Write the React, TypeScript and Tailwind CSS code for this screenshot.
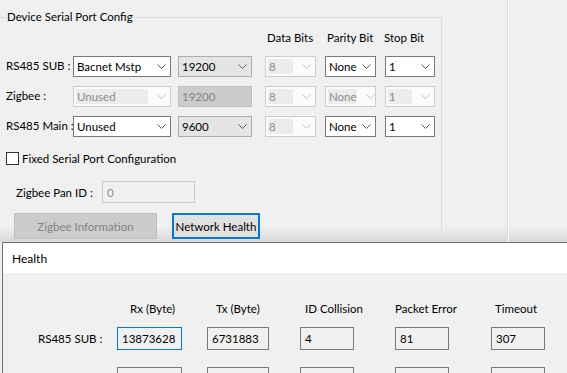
import React from "react"

type Kind = "white" | "gray" | "grayOff" | "editOff"

function Chevron({ off }: { off?: boolean }) {
  return (
    <svg width="9" height="5" viewBox="0 0 9 5" className="shrink-0">
      <path d="M0.5 0.5 L4.5 4.5 L8.5 0.5" fill="none" stroke={off ? "#c2c2c2" : "#5a5a5a"} strokeWidth="1" />
    </svg>
  )
}

function Combo({ value, kind, w, className = "" }: { value: string; kind: Kind; w: string; className?: string }) {
  if (kind === "editOff") {
    return (
      <div className={`${w} ${className} h-[21px] shrink-0 flex items-center border border-[#cccccc] bg-[#fbfbfb] pl-[2px] pr-[4px]`}>
        <div className="flex-1 h-[15px] mr-[9px] bg-[#ececec] pl-[1px] text-[#8a8a8a] leading-[15px]">{value}</div>
        <Chevron off />
      </div>
    )
  }
  const box =
    kind === "white"
      ? "border-[#7a7a7a] bg-white text-black"
      : kind === "gray"
        ? "border-[#adadad] bg-[#e5e5e5] text-black"
        : "border-[#bfbfbf] bg-[#cccccc] text-[#838383]"
  return (
    <div className={`${w} ${className} h-[21px] shrink-0 flex items-center justify-between border ${box} pl-[3px] pr-[4px]`}>
      <span>{value}</span>
      <Chevron off={kind === "grayOff"} />
    </div>
  )
}

function Field({ value, w, focus, className = "" }: { value?: string; w: string; focus?: boolean; className?: string }) {
  return (
    <div
      className={`${w} ${className} h-[23px] shrink-0 flex items-center border ${focus ? "border-[#0078d7]" : "border-[#7a7a7a]"} bg-[#f0f0f0] pl-[4px] text-black`}
    >
      {value}
    </div>
  )
}

export default function App() {
  const rows: { label: string; a: [string, Kind]; b: [string, Kind]; p: [string, Kind]; s: [string, Kind] }[] = [
    { label: "RS485 SUB :", a: ["Bacnet Mstp", "white"], b: ["19200", "gray"], p: ["None", "white"], s: ["1", "white"] },
    { label: "Zigbee :", a: ["Unused", "editOff"], b: ["19200", "grayOff"], p: ["None", "editOff"], s: ["1", "editOff"] },
    { label: "RS485 Main :", a: ["Unused", "white"], b: ["9600", "gray"], p: ["None", "white"], s: ["1", "white"] },
  ]

  return (
    <div className="w-[567px] h-[373px] overflow-hidden whitespace-nowrap bg-[#f0f0f0] flex flex-col text-[11.5px] leading-[15px] text-black font-['Lato','Noto_Sans',sans-serif]">
      {/* main window */}
      <div className="h-[242px] shrink-0 flex bg-[linear-gradient(to_bottom,#f0f0f0_0,#f0f0f0_226px,#d8d8d8_242px)]">
        <div className="w-[507px] shrink-0">
          <fieldset className="mt-[10px] w-[442px] h-[240px] border-t border-r border-[#dcdcdc]">
            <legend className="ml-[6px] px-[1px] leading-[14px]">Device Serial Port Config</legend>

            <div className="mt-[6px] flex pl-[267px]">
              <span className="w-[60px]">Data Bits</span>
              <span className="w-[57px]">Parity Bit</span>
              <span>Stop Bit</span>
            </div>

            <div className="mt-[11px] flex flex-col gap-[9px]">
              {rows.map((r) => (
                <div key={r.label} className="flex items-center">
                  <span className="w-[73px] shrink-0 pl-[6px] -mt-[2px]">{r.label}</span>
                  <Combo w="w-[98px]" value={r.a[0]} kind={r.a[1]} />
                  <Combo w="w-[74px]" className="ml-[7px]" value={r.b[0]} kind={r.b[1]} />
                  <Combo w="w-[51px]" className="ml-[13px]" value="8" kind="editOff" />
                  <Combo w="w-[51px]" className="ml-[9px]" value={r.p[0]} kind={r.p[1]} />
                  <Combo w="w-[50px]" className="ml-[9px]" value={r.s[0]} kind={r.s[1]} />
                </div>
              ))}
            </div>

            <label className="mt-[14px] ml-[6px] flex items-center gap-[3px]">
              <span className="w-[13px] h-[13px] border border-[#333333] bg-white" />
              <span>Fixed Serial Port Configuration</span>
            </label>

            <div className="mt-[15px] flex items-center">
              <span className="w-[102px] pl-[16px]">Zigbee Pan ID :</span>
              <div className="w-[93px] h-[22px] flex items-center border border-[#cccccc] bg-[#f0f0f0] pl-[4px] text-[#8a8a8a]">0</div>
            </div>

            <div className="mt-[10px] flex">
              <button className="ml-[14px] w-[143px] h-[26px] border border-[#bfbfbf] bg-[#cccccc] text-[#838383]">
                Zigbee Information
              </button>
              <button className="ml-[15px] w-[88px] h-[26px] border-2 border-[#0078d7] bg-[#e1e1e1] text-black">
                Network Health
              </button>
            </div>
          </fieldset>
        </div>
        <div className="w-px bg-[#d9d9d9]" />
        <div className="w-px bg-white" />
      </div>

      {/* Health dialog */}
      <div className="ml-[2px] flex-1 flex flex-col border-l border-t border-[#707070] bg-[#f0f0f0]">
        <div className="h-[30px] shrink-0 flex items-center bg-white pl-[9px] text-[12px]">Health</div>

        <div className="pt-[28px] flex pl-[127px]">
          <span className="w-[86px]">Rx (Byte)</span>
          <span className="w-[89px]">Tx (Byte)</span>
          <span className="w-[90px]">ID Collision</span>
          <span className="w-[100px]">Packet Error</span>
          <span>Timeout</span>
        </div>

        <div className="mt-[11px] flex flex-col gap-[17px]">
          {[
            { label: "RS485 SUB :", v: ["13873628", "6731883", "4", "81", "307"] },
            { label: "", v: ["", "", "", "", ""] },
          ].map((r, i) => (
            <div key={i} className="flex items-center">
              <span className="w-[114px] shrink-0 pl-[35px]">{r.label}</span>
              <Field w="w-[65px]" value={r.v[0]} focus={i === 0} />
              <Field w="w-[62px]" className="ml-[25px]" value={r.v[1]} />
              <Field w="w-[54px]" className="ml-[31px]" value={r.v[2]} />
              <Field w="w-[54px]" className="ml-[41px]" value={r.v[3]} />
              <Field w="w-[54px]" className="ml-[42px]" value={r.v[4]} />
            </div>
          ))}
        </div>
      </div>
    </div>
  )
}
